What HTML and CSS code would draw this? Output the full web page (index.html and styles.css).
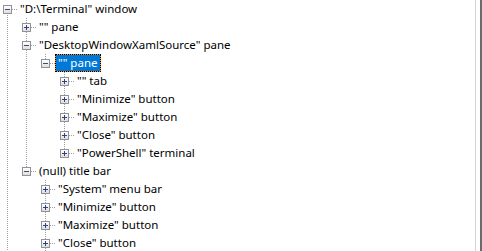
FILE: index.html
```html
<!DOCTYPE html>
<html>
<head>
<meta charset="utf-8">
<link rel="stylesheet" href="styles.css">
</head>
<body>
<div class="frame">
  <div class="tree">
    <ul class="level root">
      <li class="first more">
        <div class="row"><span class="btn open"></span><span class="label">"D:\Terminal" window</span></div>
        <ul class="level">
          <li>
            <div class="row"><span class="btn"></span><span class="label">"" pane</span></div>
          </li>
          <li>
            <div class="row"><span class="btn open"></span><span class="label">"DesktopWindowXamlSource" pane</span></div>
            <ul class="level">
              <li>
                <div class="row"><span class="btn open"></span><span class="label selected">"" pane</span></div>
                <ul class="level">
                  <li><div class="row"><span class="btn"></span><span class="label">"" tab</span></div></li>
                  <li><div class="row"><span class="btn"></span><span class="label">"Minimize" button</span></div></li>
                  <li><div class="row"><span class="btn"></span><span class="label">"Maximize" button</span></div></li>
                  <li><div class="row"><span class="btn"></span><span class="label">"Close" button</span></div></li>
                  <li><div class="row"><span class="btn"></span><span class="label">"PowerShell" terminal</span></div></li>
                </ul>
              </li>
            </ul>
          </li>
          <li>
            <div class="row"><span class="btn open"></span><span class="label">(null) title bar</span></div>
            <ul class="level">
              <li><div class="row"><span class="btn"></span><span class="label">"System" menu bar</span></div></li>
              <li><div class="row"><span class="btn"></span><span class="label">"Minimize" button</span></div></li>
              <li><div class="row"><span class="btn"></span><span class="label">"Maximize" button</span></div></li>
              <li class="more"><div class="row"><span class="btn"></span><span class="label">"Close" button</span></div></li>
            </ul>
          </li>
        </ul>
      </li>
    </ul>
  </div>
  <div class="splitter"></div>
</div>
</body>
</html>
```
FILE: styles.css
```css
html, body {
  margin: 0;
  padding: 0;
  background: #ffffff;
}
body {
  font-family: "Noto Sans", "Liberation Sans", Arial, sans-serif;
  font-size: 11.5px;
  color: #000000;
}
.frame {
  display: flex;
  height: 251px;
  overflow: hidden;
}
.tree {
  flex: 0 0 475px;
  overflow: hidden;
}
.splitter {
  flex: 0 0 7px;
  box-sizing: border-box;
  border-left: 1px solid #d4d4d4;
  border-right: 2px solid #6b6b6b;
}
ul.level {
  list-style: none;
  margin: 0;
  padding: 0 0 0 19px;
}
ul.root {
  padding-left: 0;
}
li {
  margin: 0;
  padding: 0;
  background-image: repeating-linear-gradient(to bottom, #a0a0a0 0 1px, transparent 1px 2px);
  background-size: 1px 100%;
  background-position: 7px 0;
  background-repeat: no-repeat;
}
li:last-child {
  background-image: none;
}
li.more {
  background-image: repeating-linear-gradient(to bottom, #a0a0a0 0 1px, transparent 1px 2px);
}
li.first {
  background-position: 7px 9px;
}
.row {
  display: flex;
  align-items: center;
  height: 18px;
  white-space: nowrap;
  background-image:
    repeating-linear-gradient(to right, #a0a0a0 0 1px, transparent 1px 2px),
    repeating-linear-gradient(to bottom, #a0a0a0 0 1px, transparent 1px 2px);
  background-size: 5px 1px, 1px 9px;
  background-position: 12px 9px, 7px 0;
  background-repeat: no-repeat;
}
li.first > .row {
  background-size: 5px 1px, 0 0;
}
.btn {
  flex: 0 0 9px;
  width: 9px;
  height: 9px;
  box-sizing: border-box;
  margin-left: 3px;
  border: 1px solid #929292;
  background:
    linear-gradient(#2e3f8c, #2e3f8c) center / 5px 1px no-repeat,
    linear-gradient(#2e3f8c, #2e3f8c) center / 1px 5px no-repeat,
    linear-gradient(to bottom, #ffffff, #dedede);
}
.btn.open {
  background:
    linear-gradient(#3b4a7a, #3b4a7a) center / 5px 1px no-repeat,
    linear-gradient(to bottom, #ffffff, #dedede);
}
.label {
  margin-left: 5px;
  height: 18px;
  line-height: 16px;
  box-sizing: border-box;
  padding: 0 2px;
  border: 1px solid transparent;
}
.label.selected {
  color: #ffffff;
  background: #ff8a1e;
  border: 1px dotted #000000;
  box-shadow: inset 0 0 0 40px #0078d7;
}
```
